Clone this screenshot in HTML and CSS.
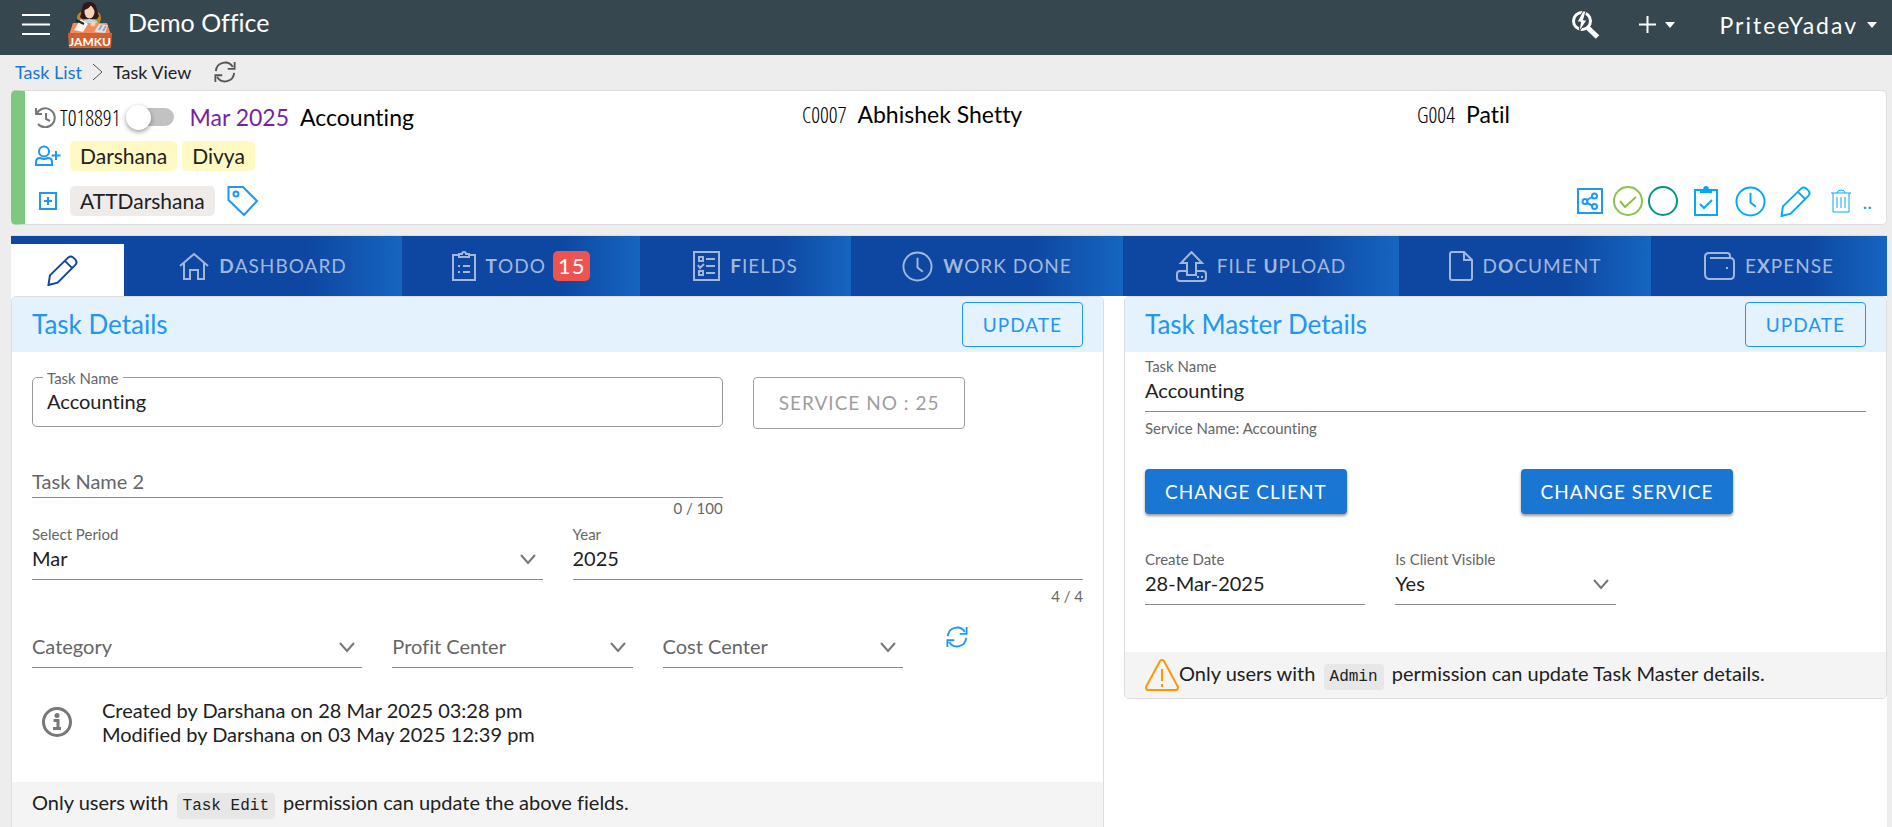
FILE: index.html
```
<!DOCTYPE html>
<html lang="en">
<head>
<meta charset="utf-8">
<title>Task View - Demo Office</title>
<link rel="stylesheet" href="styles.css">
</head>
<body>
<svg class="sprite" aria-hidden="true">
  <symbol id="refresh" viewBox="0 0 24 24"><path d="M2 11A10 10 0 0 1 20.500 6.500M22 13A10 10 0 0 1 3.500 17.500M22.500 1v7.500H15M1.500 23v-7.500H9"/></symbol>
  <symbol id="chevron" viewBox="0 0 16 16"><path d="M1 4l7 8 7-8"/></symbol>
  <symbol id="pencil" viewBox="0 0 32 32"><path d="M3 21L22 2.500Q24.500 0.500 27 2.500L29.500 5Q31.500 7.500 29.500 10L11 28.500L1.500 31ZM18.500 6L26 13.500M3 21L1.500 31"/></symbol>
  <symbol id="clock" viewBox="0 0 32 32"><circle cx="16" cy="16" r="14.500"/><path d="M16 7v10l5.500 4.500"/></symbol>
</svg>

<header class="topbar">
  <button class="icon-btn menu" aria-label="Menu"><svg width="28" height="24" viewBox="0 0 28 24"><path d="M0 2h28M0 11.500h28M0 21h28"/></svg></button>
  <svg class="logo" width="44" height="46" viewBox="0 0 44 46" role="img" aria-label="Jamku">
    <ellipse cx="14" cy="16" rx="5" ry="6" fill="#b08d22"/><ellipse cx="29" cy="16" rx="4" ry="6" fill="#b08d22"/>
    <path d="M12 15C15 9 12 0 21 0S28 8 31 14l-2 3H14Z" fill="#34161b"/>
    <path d="M14 27l1-8q6-4 14 0l2 8Z" fill="#b9dccf"/>
    <ellipse cx="21.500" cy="10" rx="5" ry="6.500" fill="#f5d3b8"/>
    <path d="M16 8q5-1 7-5l4 6 0-6-5-3-6 3Z" fill="#34161b"/>
    <path d="M5 21h34l4 12H1Z" fill="#f58a5b"/>
    <path d="M6 28l7-11 7 5-5 8Z" fill="#f4f6f8"/><path d="M8 18l8 4" stroke="#222" stroke-width="2"/>
    <path d="M26 30l5-8 9 1-3 8Z" fill="#dce3ea"/><path d="M31 28l3-5M35 29l3-5" stroke="#9aa7b5"/>
    <circle cx="25" cy="22" r="2.500" fill="#f5d3b8"/>
    <path d="M0 31h44l-1 15H1Z" fill="#d0622f"/>
    <text class="logo-text" x="22" y="44" text-anchor="middle">JAMKU</text>
  </svg>
  <h1 class="office">Demo Office</h1>
  <div class="spacer"></div>
  <button class="icon-btn quick" aria-label="Quick search"><svg width="30" height="30" viewBox="0 0 30 30"><circle cx="11" cy="11" r="8.500" stroke-width="3"/><path d="M17 18l9.500 9" stroke-width="5"/><path d="M12 1L6 12h3.500L8 22l8-12h-3.500L15 1Z" fill="#fff" stroke="#37474f" stroke-width="1"/></svg></button>
  <button class="icon-btn add" aria-label="Add"><svg width="17" height="17" viewBox="0 0 17 17"><path d="M8.500 0v17M0 8.500h17"/></svg><i class="caret"></i></button>
  <button class="icon-btn user">PriteeYadav<i class="caret"></i></button>
</header>

<nav class="crumbs" aria-label="Breadcrumb">
  <a href="#list">Task List</a>
  <svg width="11" height="18" viewBox="0 0 11 18"><path d="M1 1l9 8-9 8"/></svg>
  <span>Task View</span>
  <button class="icon-btn reload" aria-label="Reload"><svg width="22" height="22"><use href="#refresh"/></svg></button>
</nav>

<section class="summary">
  <div class="first">
    <div class="task">
      <svg class="history" width="21" height="21" viewBox="0 0 21 21"><path d="M1 1v6h6M1.500 7A9.500 9.500 0 1 1 3 17M11 6v6l4 2"/></svg>
      <span class="code">T018891</span>
      <label class="switch"><input type="checkbox" aria-label="Toggle task"></label>
      <span class="period">Mar 2025</span>
      <span class="name">Accounting</span>
    </div>
    <div class="party"><span class="code">C0007</span><span class="name">Abhishek Shetty</span></div>
    <div class="party"><span class="code">G004</span><span class="name">Patil</span></div>
  </div>
  <div class="line people">
    <button class="icon-btn lead" aria-label="Add user"><svg width="26" height="22" viewBox="0 0 26 22"><circle cx="9" cy="6.500" r="5"/><path d="M1 20v-3q0-4 4-4 4 2 8 0 4 0 4 4v3ZM21 6v9M16.500 10.500h9"/></svg></button>
    <span class="chip user-chip">Darshana</span><span class="chip user-chip">Divya</span>
  </div>
  <div class="line extras">
    <button class="icon-btn lead" aria-label="Add tag"><svg width="26" height="18" viewBox="0 0 26 18"><path d="M5 1h16v16H5ZM13 5v8M9 9h8"/></svg></button>
    <span class="chip tag-chip">ATTDarshana</span>
    <button class="icon-btn tag" aria-label="Tags"><svg width="32" height="30" viewBox="0 0 32 30"><path d="M1.500 1H16L30 15 17 29 1.500 14Z"/><circle cx="9" cy="8" r="2.500"/></svg></button>
    <div class="actions">
      <button class="icon-btn blue" aria-label="Share"><svg width="26" height="26" viewBox="0 0 26 26"><path d="M1 1h24v24H1ZM9 12.500l6-3.500M9 14.500l6 3"/><circle cx="8" cy="13.500" r="2.500"/><circle cx="17.500" cy="8" r="2.500"/><circle cx="17.500" cy="18.500" r="2.500"/></svg></button>
      <button class="icon-btn green" aria-label="Complete"><svg width="30" height="30" viewBox="0 0 30 30"><circle cx="15" cy="15" r="14"/><path d="M7 15l5 6 11-10"/></svg></button>
      <button class="icon-btn teal" aria-label="Status"><svg width="30" height="30" viewBox="0 0 30 30"><circle cx="15" cy="15" r="14"/></svg></button>
      <button class="icon-btn clip" aria-label="Checklist"><svg width="24" height="30" viewBox="0 0 24 30"><path d="M7 4H1v25h22V4h-6M6 18l4 4 8-8"/><path class="filled" d="M7 4h3q0-3 2-3t2 3h3v2H7Z"/></svg></button>
      <button class="icon-btn time" aria-label="Work time"><svg width="31" height="31"><use href="#clock"/></svg></button>
      <button class="icon-btn edit" aria-label="Edit"><svg width="31" height="31"><use href="#pencil"/></svg></button>
      <button class="icon-btn trash" aria-label="Delete"><svg width="20" height="24" viewBox="0 0 20 24"><path d="M0 4h20M2 4v19h16V4M6 4q0-3 4-3t4 3M6 8v11M10 8v11M14 8v11"/></svg></button>
      <button class="icon-btn dots" aria-label="More">..</button>
    </div>
  </div>
</section>

<main class="board">
  <nav class="tabs">
    <button class="tab active" aria-label="Edit"><svg width="31" height="31"><use href="#pencil"/></svg></button>
    <button class="tab"><svg width="30" height="28" viewBox="0 0 30 28"><path d="M1 14L15 2l14 12M5 11v16h6v-9h8v9h6V11"/></svg><span><b>D</b>ASHBOARD</span></button>
    <button class="tab"><svg width="24" height="30" viewBox="0 0 24 30"><path d="M7 4H1v25h22V4h-6M7 3h3q0-2 2-2t2 2h3v3H7ZM11 15h7M11 21h7M6 15h2M6 21h2"/></svg><span><b>T</b>ODO</span><em class="badge">15</em></button>
    <button class="tab"><svg width="27" height="30" viewBox="0 0 27 30"><path d="M1 1h25v28H1ZM13 8h9M13 15h9M13 22h9M6 6h4v4H6ZM5 14l2 3 4-4M6 20h4v4H6Z"/></svg><span><b>F</b>IELDS</span></button>
    <button class="tab"><svg width="31" height="31"><use href="#clock"/></svg><span><b>W</b>ORK DONE</span></button>
    <button class="tab"><svg width="31" height="31" viewBox="0 0 31 31"><path d="M11 24V12H5L15.500 1 26 12h-6v12ZM11 20H4q-3 0-3 3v4q0 3 3 3h23q3 0 3-3v-4q0-3-3-3h-7M21 26h2M25 26h2"/></svg><span>FILE <b>U</b>PLOAD</span></button>
    <button class="tab"><svg width="24" height="30" viewBox="0 0 24 30"><path d="M3 1h12l8 8v18q0 2-2 2H3q-2 0-2-2V3q0-2 2-2ZM15 1v8h8"/></svg><span>D<b>O</b>CUMENT</span></button>
    <button class="tab"><svg width="31" height="28" viewBox="0 0 31 28"><path d="M26 6V4q0-3-3-3H5Q1 1 1 5v17q0 5 5 5h20q4 0 4-4V10q0-4-4-4H6M22 16h2"/></svg><span>E<b>X</b>PENSE</span></button>
  </nav>

  <div class="panels">
    <form class="panel">
      <div class="panel-head"><h2>Task Details</h2><button type="button" class="btn outline">UPDATE</button></div>
      <div class="grid details">
        <div class="outlined s8"><label for="tname">Task Name</label><input id="tname" type="text" value="Accounting"></div>
        <div class="s4"><button type="button" class="btn service" disabled>SERVICE NO : 25</button></div>
      </div>
      <div class="grid second">
        <div class="field low s8"><input type="text" placeholder="Task Name 2" aria-label="Task Name 2"><small class="count">0 / 100</small></div>
      </div>
      <div class="grid when">
        <div class="field s6"><label for="period">Select Period</label><div class="pick"><select id="period"><option>Mar</option></select><svg width="16" height="16"><use href="#chevron"/></svg></div></div>
        <div class="field s6"><label for="year">Year</label><input id="year" type="text" value="2025"><small class="count below">4 / 4</small></div>
      </div>
      <div class="grid centers">
        <div class="field s4"><div class="pick empty"><select aria-label="Category"><option>Category</option></select><svg width="16" height="16"><use href="#chevron"/></svg></div></div>
        <div class="field s3"><div class="pick empty"><select aria-label="Profit Center"><option>Profit Center</option></select><svg width="16" height="16"><use href="#chevron"/></svg></div></div>
        <div class="field s3"><div class="pick empty"><select aria-label="Cost Center"><option>Cost Center</option></select><svg width="16" height="16"><use href="#chevron"/></svg></div></div>
        <div class="s2"><button type="button" class="icon-btn sync" aria-label="Refresh centers"><svg width="22" height="22"><use href="#refresh"/></svg></button></div>
      </div>
      <div class="audit">
        <svg width="30" height="30" viewBox="0 0 30 30"><circle cx="15" cy="15" r="13.500"/><circle class="solid" cx="15" cy="8.500" r="2.500"/><path d="M11.500 13.500H16V21M11 21.500h8"/></svg>
        <p>Created by Darshana on 28 Mar 2025 03:28 pm<br>Modified by Darshana on 03 May 2025 12:39 pm</p>
      </div>
      <div class="note">
        <p>Only users with <code>Task Edit</code> permission can update the above fields.</p>
        <p>Compliance field in Audit</p>
      </div>
    </form>

    <form class="panel">
      <div class="panel-head"><h2>Task Master Details</h2><button type="button" class="btn outline">UPDATE</button></div>
      <div class="grid master">
        <div class="field s12"><label for="mname">Task Name</label><input id="mname" type="text" value="Accounting"><small class="below">Service Name: Accounting</small></div>
      </div>
      <div class="grid changes">
        <div class="s6"><button type="button" class="btn solid-btn">CHANGE CLIENT</button></div>
        <div class="s6"><button type="button" class="btn solid-btn">CHANGE SERVICE</button></div>
      </div>
      <div class="grid dates">
        <div class="field s4"><label for="cdate">Create Date</label><input id="cdate" type="text" value="28-Mar-2025"></div>
        <div class="field s4"><label for="visible">Is Client Visible</label><div class="pick"><select id="visible"><option>Yes</option></select><svg width="16" height="16"><use href="#chevron"/></svg></div></div>
      </div>
      <div class="note warn">
        <svg width="34" height="32" viewBox="0 0 34 32"><path d="M15 2q2-2 4 0l14 26q0 3-2 3H3q-2 0-2-3ZM17 10v12M17 25v3"/></svg>
        <p>Only users with <code>Admin</code> permission can update Task Master details.</p>
      </div>
    </form>
  </div>
</main>
</body>
</html>
```
FILE: styles.css
```
*{box-sizing:border-box}
html{scrollbar-width:none}
body{margin:0;min-height:100vh;display:flex;flex-direction:column;background:#ededed;color:#212121;font-family:Lato,"Open Sans",sans-serif;font-size:20px;line-height:24px;font-variant-ligatures:none}
button,input,select{font:inherit;color:inherit;margin:0}
h1,h2,p{margin:0;font-weight:400}
.sprite{position:absolute;width:0;height:0}
svg{display:block;flex:none;fill:none;stroke:currentColor;stroke-width:2}
.filled{fill:currentColor}
.icon-btn{display:flex;align-items:center;padding:0;border:0;background:none;cursor:pointer}

.topbar{display:flex;align-items:center;height:55px;padding:0 15px 6px 22px;background:#37474f;color:#fff}
.logo{margin-left:18px;stroke:none}
.logo-text{fill:#fff;font:700 12px Lato,sans-serif}
.office{margin-left:16px;padding-bottom:5px;font-size:25px;line-height:30px}
.spacer{flex:1}
.quick{margin-right:38px}
.add{gap:9px;margin-right:44px}
.user{gap:9px;font-size:23px;letter-spacing:2px}
.caret{border:5px solid transparent;border-top:6px solid #fff;border-bottom:0}

.crumbs{display:flex;align-items:center;gap:10px;height:35px;padding:0 0 2px 15px;font-size:18px}
.crumbs a{color:#1976d2;text-decoration:none}
.crumbs svg{stroke:#555;stroke-width:1}
.crumbs .reload svg{stroke-width:2}
.reload{margin-left:13px}

.summary{margin:0 5px 0 11px;padding:11px 14px 2px 10px;background:#fff;border:1px solid #ddd;border-left:14px solid #81c784;border-radius:5px;color:#000}
.line{display:flex;align-items:center;padding-top:2px}
.first{display:grid;grid-template-columns:767fr 615fr 455fr;height:30px}
.task,.party{display:flex;align-items:center}
.party{align-items:flex-start}
.history{color:#777}
.code{font-family:"Open Sans Condensed Light","Open Sans Condensed","Open Sans",sans-serif;font-weight:300;font-size:22px}
.task .code{margin-left:4px}
.name,.period{font-size:23px}
.period{margin-left:15px;color:#7b1fa2}
.name{margin-left:11px}
.switch{display:flex;width:48px;height:18px;margin-left:6px;align-items:center;border-radius:9px;background:linear-gradient(90deg,transparent 12px,#c2c2c2 12px)}
.switch input{appearance:none;width:25px;height:25px;margin:0;border-radius:50%;background:#fff;box-shadow:0 2px 5px #0006}
.people{height:46px;gap:5px}
.lead{width:26px;margin-right:9px;color:#2196f3}
.people .lead{margin-right:4px}
.chip{height:30px;padding:3px 10px;border-radius:5px;color:#212121;font-size:21px}
.user-chip{background:#fff9c4}
.tag-chip{background:#efebe9}
.extras{height:44px}
.tag{margin-left:12px;color:#2196f3}
.actions{display:flex;align-items:center;margin-left:auto;color:#03a9f4}
.blue{color:#2196f3}
.green{margin-left:10px;color:#8bc34a}
.teal{margin-left:5px;color:#009688}
.clip{margin-left:16px}
.time{margin-left:17px}
.edit{margin-left:14px}
.trash{margin:0 12px 0 20px}
.trash svg{stroke-width:1}

.board{flex:1;margin:10px 5px 0 11px;background:#fff;border-top:1px solid #ddd}
.tabs{display:grid;grid-template-columns:113fr 278fr 238fr 211fr 272fr 276fr 252fr 236fr;height:60px}
.tab{display:flex;align-items:center;justify-content:center;gap:10px;padding:0;border:0;background:linear-gradient(90deg,#0d47a1 66%,#1565c0);color:#a3b7db;font-size:19px;letter-spacing:1px;cursor:pointer;white-space:nowrap}
.active{border-top:8px solid #0d47a1;background:#fff;padding-right:11px;color:#0d47a1}
.badge{margin-left:-3px;padding:3px 5px;border-radius:5px;background:#ef5350;color:#fff;font-style:normal;font-size:22px}

.panels{display:grid;grid-template-columns:1093fr 763fr;gap:20px;align-items:start}
.panel{border:1px solid #ddd;border-radius:5px;overflow:hidden}
.panel-head{display:flex;align-items:center;justify-content:space-between;height:55px;padding:0 20px;background:#e3f2fd}
.panel-head h2{padding-bottom:2px;color:#2196f3;font-size:26px;line-height:30px}
.btn{display:block;height:45px;padding:0 20px;border:1px solid;border-radius:4px;background:none;font-size:19px;letter-spacing:1px;cursor:pointer;white-space:nowrap}
.outline{color:#2196f3}
.service{height:52px;padding:0 25px;color:#9e9e9e}
.solid-btn{border:0;background:#1976d2;color:#fff;box-shadow:0 2px 3px #0006}

.grid{display:grid;grid-template-columns:repeat(12,1fr);column-gap:30px;margin:0 20px}
.s2{grid-column:span 2}.s3{grid-column:span 3}.s4{grid-column:span 4}.s6{grid-column:span 6}.s8{grid-column:span 8}.s12{grid-column:span 12}
.outlined{position:relative;height:50px}
.outlined input{width:100%;height:50px;padding:0 14px 2px;border:1px solid #999;border-radius:5px;background:none}
.outlined label{position:absolute;left:11px;top:-9px;padding:0 4px;background:#fff}
.field label,.outlined label,small{display:block;font-size:15px;line-height:20px;color:#666}
.field input,.field select{display:block;width:100%;height:36px;padding:0 0 7px;border:0;border-bottom:1px solid #8a8a8a;border-radius:0;background:none;appearance:none}
.field.low input{padding:3px 0 0}
.field input::placeholder{color:#666;opacity:1}
.pick{display:grid;align-items:center}
.pick select,.pick svg{grid-area:1/1}
.pick svg{justify-self:end;margin:0 7px 7px 0;color:#777;pointer-events:none}
.empty{color:#666}
.count{text-align:right}
.below{margin-top:6px}
.details{padding-top:25px}
.second{margin-top:33px}
.when{margin-top:6px}
.centers{margin-top:26px}
.sync{margin:-6px 0 0 13px;color:#2196f3}
.audit{display:flex;align-items:center;gap:30px;margin:30px 30px 36px}
.audit svg{color:#777;stroke-width:3}
.audit .solid{fill:#777;stroke:none}
.note{padding:6px 20px;background:#f4f4f4}
.note p{line-height:28px}
code{margin:0 3px;padding:4px 6px;border-radius:4px;background:#e7e7e7;font-family:"Liberation Mono",monospace;font-size:16px}
.master{padding-top:4px}
.changes{margin-top:31px}
.dates{margin-top:35px;margin-bottom:47px}
.warn{display:flex;align-items:center;height:46px}
.warn svg{color:#ff9800}
```
